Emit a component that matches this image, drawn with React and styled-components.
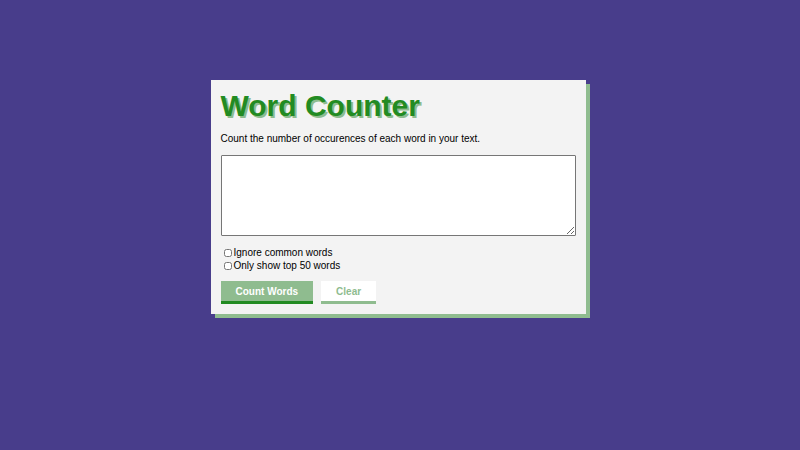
import React, { useState } from 'react'
import styled, { createGlobalStyle } from 'styled-components'

const GlobalStyle = createGlobalStyle`
    html, body {
        margin: 0;
        padding: 0;
        height: 100%;
        background-color: #483d8b;
        font-family: "Liberation Sans", Arial, sans-serif;
    }
`

const Page = styled.div`
    width: 100vw;
    height: 100vh;
    padding: 80px 4px 0 0;
    box-sizing: border-box;

    display: flex;
    justify-content: center;
    align-items: flex-start;
`

const Card = styled.div`
    width: 375px;
    box-sizing: border-box;
    padding: 8px 10px 10px;

    background-color: #f3f3f3;
    box-shadow: 4px 4px 0 #8fbc8f;

    h1 {
        margin: 0;
        font-size: 30px;
        line-height: 36px;
        font-weight: 700;
        color: #228b22;
        text-shadow: 2px 2px 0 #8fbc8f;
    }

    p {
        margin: 9px 0 0;
        font-size: 10px;
        line-height: 12px;
        color: #000;
    }
`

const TextBox = styled.textarea`
    display: block;
    width: 355px;
    height: 81px;
    box-sizing: border-box;
    margin-top: 10px;
    padding: 2px;

    border: 1px solid #767676;
    border-radius: 1px;
    background: #fff;
    font-family: "Liberation Mono", monospace;
    font-size: 10px;
    resize: both;

    :focus {
        outline: none;
    }
`

const Options = styled.div`
    margin-top: 10px;
    display: flex;
    flex-direction: column;
`

const Option = styled.label`
    display: flex;
    align-items: center;
    height: 13px;
    font-size: 10px;
    color: #000;

    input {
        width: 8px;
        height: 8px;
        margin: 0 2px 0 3px;
    }
`

const Actions = styled.div`
    margin-top: 9px;
    display: flex;
    gap: 8px;
`

const Button = styled.button`
    height: 23px;
    padding: 0 15px;
    box-sizing: border-box;

    font-family: "Liberation Sans", Arial, sans-serif;
    font-size: 10px;
    font-weight: 700;
    cursor: pointer;

    border: none;
    border-bottom: 3px solid ${props => props.primary ? '#228b22' : '#8fbc8f'};
    border-radius: 0;
    color: ${props => props.primary ? '#fff' : '#8fbc8f'};
    background-color: ${props => props.primary ? '#8fbc8f' : '#fff'};
`

const App = () => {
    const [text, setText] = useState('')

    return (
        <Page>
            <GlobalStyle />
            <Card>
                <h1>Word Counter</h1>
                <p>Count the number of occurences of each word in your text.</p>

                <TextBox value={text} onChange={e => setText(e.target.value)} />

                <Options>
                    <Option><input type="checkbox" />Ignore common words</Option>
                    <Option><input type="checkbox" />Only show top 50 words</Option>
                </Options>

                <Actions>
                    <Button primary>Count Words</Button>
                    <Button onClick={() => setText('')}>Clear</Button>
                </Actions>
            </Card>
        </Page>
    )
}

export default App
